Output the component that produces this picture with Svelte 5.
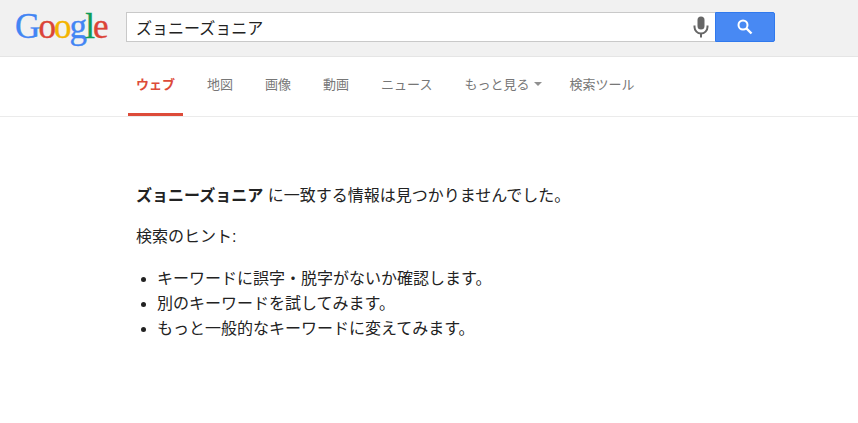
<script>
    const tabs = [
        { label: 'ウェブ', active: true },
        { label: '地図' },
        { label: '画像' },
        { label: '動画' },
        { label: 'ニュース' },
        { label: 'もっと見る', more: true },
        { label: '検索ツール' }
    ]

    const hints = [
        'キーワードに誤字・脱字がないか確認します。',
        '別のキーワードを試してみます。',
        'もっと一般的なキーワードに変えてみます。'
    ]

    const query = 'ズョニーズョニア'
</script>

<header class="top">
    <div class="logo" aria-label="Google">
        <span class="blue">G</span><span class="red">o</span><span class="yellow">o</span><span class="blue">g</span><span class="green">l</span><span class="red">e</span>
    </div>
    <form class="search" on:submit|preventDefault>
        <div class="field">
            <span class="query">{query}</span>
            <svg class="mic" width="16" height="22" viewBox="0 0 16 22">
                <rect x="4.5" y="0.5" width="7" height="13" rx="3.5" fill="#666" />
                <path d="M1.5 9.5v1.5a6.5 6.5 0 0 0 13 0v-1.5" fill="none" stroke="#666" stroke-width="2" />
                <rect x="7" y="17" width="2" height="4.5" fill="#666" />
            </svg>
        </div>
        <button type="submit" aria-label="検索">
            <svg width="16" height="16" viewBox="0 0 16 16">
                <circle cx="6" cy="6" r="4.5" fill="none" stroke="#fff" stroke-width="2" />
                <path d="M9.5 9.5l5 5" stroke="#fff" stroke-width="2.4" />
            </svg>
        </button>
    </form>
</header>

<nav class="tabs">
    {#each tabs as tab}
        <div class="tab" class:active={tab.active}>
            {tab.label}
            {#if tab.more}<span class="caret"></span>{/if}
        </div>
    {/each}
</nav>

<main class="results">
    <p class="none"><b>{query}</b> に一致する情報は見つかりませんでした。</p>
    <p class="tip">検索のヒント:</p>
    <ul>
        {#each hints as hint}
            <li>{hint}</li>
        {/each}
    </ul>
</main>

<style>
    :global(body) {
        margin: 0;
        background: #fff;
        font-family: "Liberation Sans", "Noto Sans CJK JP", sans-serif;
        color: #222;
    }

    .top {
        display: flex;
        align-items: center;
        height: 56px;
        background: #f1f1f1;
        border-bottom: 1px solid #e5e5e5;
    }

    .logo {
        width: 126px;
        padding-left: 15px;
        box-sizing: border-box;
        font-family: "Liberation Serif", serif;
        font-size: 35px;
        line-height: 40px;
        letter-spacing: -1.9px;
        -webkit-text-stroke: 0.4px;
        margin-top: -3px;
    }

    .blue { color: #4285f4; }
    .red { color: #db4437; }
    .yellow { color: #f4b400; }
    .green { color: #0f9d58; }

    .search {
        display: flex;
        height: 30px;
        margin-top: -2px;
    }

    .field {
        display: flex;
        align-items: center;
        justify-content: space-between;
        width: 589px;
        box-sizing: border-box;
        background: #fff;
        border: 1px solid #c9c9c9;
        border-right: 0;
        padding: 0 6px 0 9px;
    }

    .query {
        font-size: 16px;
        color: #222;
    }

    button {
        display: flex;
        align-items: center;
        justify-content: center;
        width: 60px;
        padding: 0;
        background: #4889f3;
        border: 1px solid #3079ed;
        border-radius: 0 2px 2px 0;
    }

    .tabs {
        display: flex;
        height: 59px;
        padding-left: 128px;
        border-bottom: 1px solid #ebebeb;
    }

    .tab {
        display: flex;
        align-items: center;
        gap: 5px;
        box-sizing: border-box;
        padding: 0 8px 3px;
        margin-right: 16px;
        font-size: 13px;
        color: #777;
        border-bottom: 3px solid transparent;
    }

    .tab.active {
        color: #dd4b39;
        font-weight: bold;
        border-bottom-color: #dd4b39;
    }

    .caret {
        width: 0;
        height: 0;
        margin-right: -5px;
        border-top: 4px solid #909090;
        border-left: 4px solid transparent;
        border-right: 4px solid transparent;
    }

    .results {
        padding: 66px 0 0 136px;
        font-size: 16px;
        line-height: 25px;
    }

    p {
        margin: 0 0 16px;
    }

    p.tip {
        margin-bottom: 17px;
    }

    ul {
        margin: 0;
        padding-left: 21px;
    }
</style>
